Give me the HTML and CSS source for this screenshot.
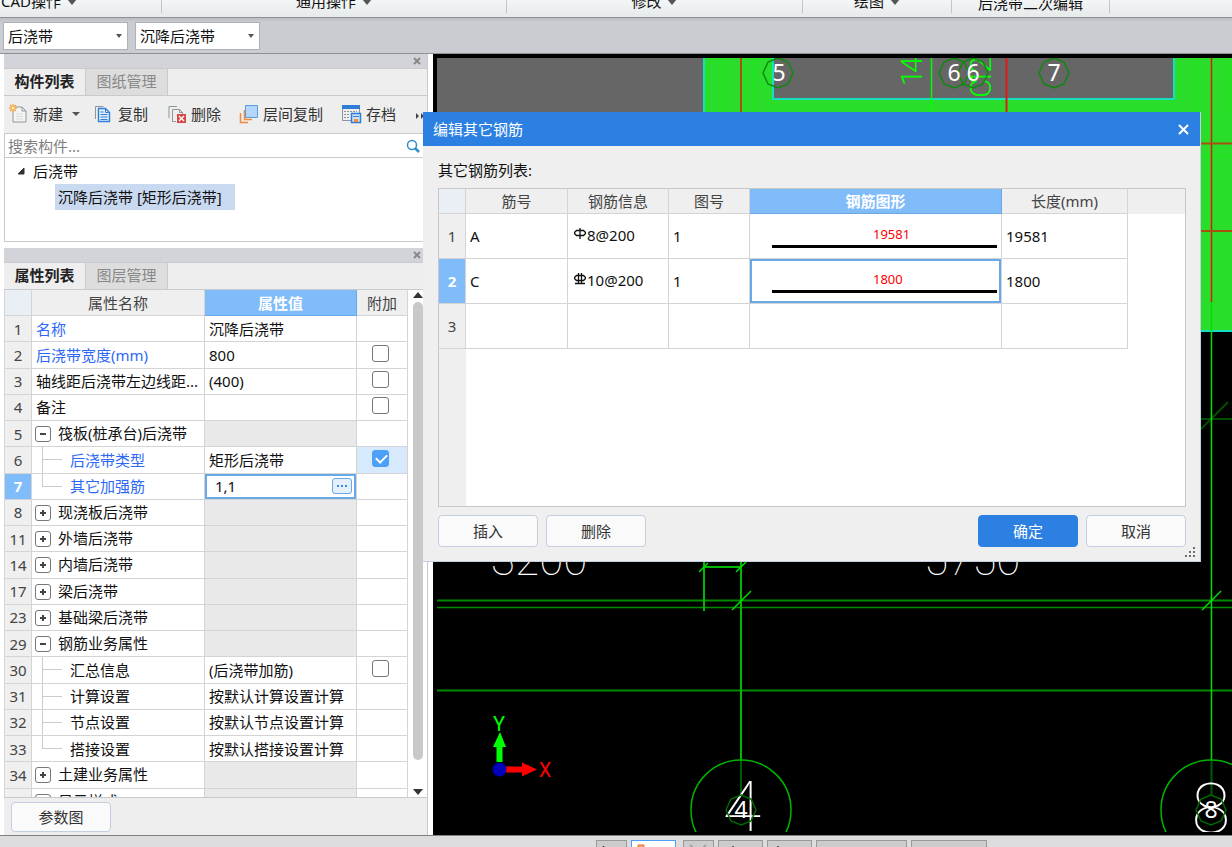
FILE: index.html
```html
<!DOCTYPE html>
<html lang="zh-CN">
<head>
  <meta charset="utf-8">
  <title>编辑其它钢筋</title>
  <link rel="stylesheet" href="styles.css">
</head>
<body>

<nav class="ribbon">
  <div class="group first">CAD操作 <i class="caret big"></i></div>
  <div class="group common">通用操作 <i class="caret big"></i></div>
  <div class="group modify">修改 <i class="caret big"></i></div>
  <div class="group draw">绘图 <i class="caret big"></i></div>
  <div class="group edit">后浇带二次编辑</div>
</nav>

<div class="pickbar">
  <label class="pick"><select aria-label="构件类型"><option>后浇带</option></select></label>
  <label class="pick"><select aria-label="构件名称"><option>沉降后浇带</option></select></label>
</div>

<div class="workspace">
  <aside class="side">
    <section class="dock">
      <div class="dock-title"><button class="x" aria-label="关闭"><svg width="8" height="8"><path d="M1 1l6 6M7 1l-6 6"/></svg></button></div>
      <div class="tabs">
        <button class="tab active">构件列表</button>
        <button class="tab">图纸管理</button>
      </div>
      <div class="toolbar">
        <button class="tool t-new">
          <svg width="20" height="20" viewBox="0 0 20 20"><path d="M4 3h9l4 4v11H4z" fill="#f4f4f4" stroke="#8c969c"/><path d="M13 3v4h4" fill="none" stroke="#8c969c"/><path d="M7 10h7M7 12.500h7M7 15h7" stroke="#d5dadd"/><path d="M4 0v8M0 4h8M1 1l6 6M7 1l-6 6" stroke="#f7a53b" stroke-width="1.300"/><circle cx="4" cy="4" r="1.500" fill="#fff0c8"/></svg>
          新建 <i class="caret"></i>
        </button>
        <button class="tool t-copy">
          <svg width="18" height="20" viewBox="0 0 18 20"><path d="M1.500 15V2.500h8" fill="none" stroke="#8c969c"/><path d="M4.500 4.500h7l4 4v9h-11z" fill="#e5f0fc" stroke="#2f7dd6" stroke-width="1.400"/><path d="M11.500 4.500v4h4M6.500 8h3M6.500 10.500h7M6.500 13h7M6.500 15.500h7" fill="none" stroke="#2f7dd6"/></svg>
          复制
        </button>
        <button class="tool t-del">
          <svg width="20" height="20" viewBox="0 0 20 20"><path d="M2 14V2.500h8M9 17.500H5.500v-12h7l3 3V10M12.500 5.500v3h3" fill="none" stroke="#8c969c"/><path d="M10 10h9v9h-9z" fill="#d64a4a"/><path d="M12 12l5 5M17 12l-5 5" stroke="#fff" stroke-width="1.300"/></svg>
          删除
        </button>
        <button class="tool t-layer">
          <svg width="20" height="20" viewBox="0 0 20 20"><path d="M1.500 9v9.500H9M5.500 6v9.500H13" fill="none" stroke="#f08a3c" stroke-width="1.500"/><path d="M6.500 1.500h12v12h-12z" fill="#b5d6fb" stroke="#5b9be4"/></svg>
          层间复制
        </button>
        <button class="tool t-save">
          <svg width="21" height="20" viewBox="0 0 21 20"><path d="M1 1h18v4H1z" fill="#2f7dd6"/><path d="M1.500 5v11.500H10M18.500 5v5" fill="none" stroke="#8c969c"/><path d="M3 7.500h13M3 10.500h6M3 13.500h6" stroke="#8c969c" stroke-dasharray="2 1"/><path d="M10.500 9.500h9v9h-9z" fill="#cfe3fa" stroke="#2f7dd6" stroke-width="1.500"/><path d="M13 15h4v3h-4z" fill="#f08a3c"/><path d="M12 12.500h6" stroke="#2f7dd6"/></svg>
          存档
        </button>
        <button class="more" aria-label="更多"><svg width="8" height="8"><path d="M0 1l3 3-3 3zM5 1l3 3-3 3z" fill="#444"/></svg></button>
      </div>
      <div class="search">
        <input type="text" placeholder="搜索构件..." aria-label="搜索构件">
        <svg width="14" height="14" viewBox="0 0 14 14"><circle cx="6" cy="6" r="4.500" fill="none" stroke="#2f8fc9" stroke-width="1.500"/><path d="M9 9l4 4" stroke="#2f8fc9" stroke-width="2.500"/></svg>
      </div>
      <div class="tree">
        <div class="node"><svg width="8" height="8"><path d="M7 1v6H1z" fill="#333" stroke="#333"/></svg>后浇带</div>
        <div class="leaf">沉降后浇带 [矩形后浇带]</div>
      </div>
    </section>

    <section class="dock props">
      <div class="dock-title"><button class="x" aria-label="关闭"><svg width="8" height="8"><path d="M1 1l6 6M7 1l-6 6"/></svg></button></div>
      <div class="tabs">
        <button class="tab active">属性列表</button>
        <button class="tab">图层管理</button>
      </div>
      <div class="prop-body">
        <div class="prop-scroll">
          <table class="prop-table">
            <colgroup><col class="c-no"><col class="c-name"><col class="c-val"><col class="c-add"></colgroup>
            <thead>
              <tr><th class="corner"></th><th>属性名称</th><th class="on">属性值</th><th>附加</th></tr>
            </thead>
            <tbody>
              <tr><th>1</th><td class="blue">名称</td><td>沉降后浇带</td><td></td></tr>
              <tr><th>2</th><td class="blue">后浇带宽度(mm)</td><td>800</td><td class="chk"><input type="checkbox" aria-label="附加 后浇带宽度"></td></tr>
              <tr><th>3</th><td>轴线距后浇带左边线距...</td><td>(400)</td><td class="chk"><input type="checkbox" aria-label="附加 轴线距"></td></tr>
              <tr><th>4</th><td>备注</td><td></td><td class="chk"><input type="checkbox" aria-label="附加 备注"></td></tr>
              <tr class="grp"><th>5</th><td><button class="exp minus" aria-label="折叠"></button>筏板(桩承台)后浇带</td><td></td><td></td></tr>
              <tr><th>6</th><td class="child blue">后浇带类型</td><td>矩形后浇带</td><td class="chk lit"><input type="checkbox" checked aria-label="附加 后浇带类型"></td></tr>
              <tr class="cur"><th>7</th><td class="child last blue">其它加强筋</td><td class="edit-cell"><div class="editor"><input type="text" value="1,1" aria-label="其它加强筋"><button class="dots" aria-label="编辑"><svg width="12" height="2"><path d="M1 0h2v2H1zM5 0h2v2H5zM9 0h2v2H9z" fill="#3c8ae0"/></svg></button></div></td><td></td></tr>
              <tr class="grp"><th>8</th><td><button class="exp" aria-label="展开"></button>现浇板后浇带</td><td></td><td></td></tr>
              <tr class="grp"><th>11</th><td><button class="exp" aria-label="展开"></button>外墙后浇带</td><td></td><td></td></tr>
              <tr class="grp"><th>14</th><td><button class="exp" aria-label="展开"></button>内墙后浇带</td><td></td><td></td></tr>
              <tr class="grp"><th>17</th><td><button class="exp" aria-label="展开"></button>梁后浇带</td><td></td><td></td></tr>
              <tr class="grp"><th>23</th><td><button class="exp" aria-label="展开"></button>基础梁后浇带</td><td></td><td></td></tr>
              <tr class="grp"><th>29</th><td><button class="exp minus" aria-label="折叠"></button>钢筋业务属性</td><td></td><td></td></tr>
              <tr><th>30</th><td class="child">汇总信息</td><td>(后浇带加筋)</td><td class="chk"><input type="checkbox" aria-label="附加 汇总信息"></td></tr>
              <tr><th>31</th><td class="child">计算设置</td><td>按默认计算设置计算</td><td></td></tr>
              <tr><th>32</th><td class="child">节点设置</td><td>按默认节点设置计算</td><td></td></tr>
              <tr><th>33</th><td class="child last">搭接设置</td><td>按默认搭接设置计算</td><td></td></tr>
              <tr class="grp"><th>34</th><td><button class="exp" aria-label="展开"></button>土建业务属性</td><td></td><td></td></tr>
              <tr class="grp"><th>37</th><td><button class="exp minus" aria-label="折叠"></button>显示样式</td><td></td><td></td></tr>
            </tbody>
          </table>
        </div>
        <div class="scrollbar">
          <svg width="10" height="6"><path d="M0 6l5-6 5 6z" fill="#333"/></svg>
          <div class="thumb"></div>
          <svg width="10" height="6"><path d="M0 0l5 6 5-6z" fill="#333"/></svg>
        </div>
      </div>
      <div class="prop-foot"><button class="btn">参数图</button></div>
    </section>
  </aside>

  <main class="cad">
    <svg class="drawing" viewBox="437 58 795 774" preserveAspectRatio="xMinYMin slice">
      <defs>
        <path id="bubble" d="M-15 0L-10-11L0-15L10-11L15 0L10 11L0 15L-10 11z" fill="none"/>
      </defs>
      <!-- slab -->
      <rect x="437" y="58" width="267" height="60" fill="#666"/>
      <rect x="704" y="58" width="528" height="273" fill="#2bdd2b"/>
      <path d="M722.500 58v60M753.500 58v60M1196.500 58v57M1226.500 58v60M1201 156.500h31" stroke="#12ee12" fill="none"/>
      <rect x="773" y="58" width="400" height="41" fill="#666"/>
      <path d="M704 58v60M773 56v43h401v-43M1201 331h31" stroke="#13dfc2" stroke-width="2" fill="none"/>
      <path d="M931.500 58v60" stroke="#0f0" stroke-width="1.500"/>
      <path d="M741 58v60" stroke="#a8500f" stroke-width="2"/>
      <path d="M1006.500 58v60" stroke="#e01818" stroke-width="2"/>
      <path d="M1211.500 58v244" stroke="#d81c10" stroke-width="1.500"/>
      <path d="M1201 143.500h31M1201 231h31" stroke="#a8500f" stroke-width="2"/>
      <!-- bar marks -->
      <g class="mark">
        <text transform="translate(922 86) rotate(-90)">1</text>
        <text transform="translate(922 73) rotate(-90)">4</text>
        <text transform="translate(991 98) rotate(-90)">C</text>
        <text transform="translate(991 86) rotate(-90)">1</text>
        <text transform="translate(991 73) rotate(-90)">2</text>
      </g>
      <g stroke="#0c8a0c" stroke-width="1.500">
        <use href="#bubble" x="778" y="73"/>
        <use href="#bubble" x="954" y="73"/>
        <use href="#bubble" x="973" y="73"/>
        <use href="#bubble" x="1054" y="73"/>
      </g>
      <g class="axis-no">
        <text x="779" y="81">5</text><text x="954" y="81">6</text><text x="973" y="81">6</text><text x="1054" y="81">7</text>
      </g>
      <!-- grid lines -->
      <g stroke="#008a00" stroke-width="2" fill="none">
        <path d="M437 600.500h795M437 690.500h795"/>
        <path d="M437 607.500h795" stroke-width="1.500"/>
        <path d="M741 760v35M1211.500 760v35" stroke="#005c00"/>
      </g>
      <path d="M1201 419h31M1201 429l27-27" stroke="#004d00" stroke-width="2"/>
      <path d="M1211.500 302v458" stroke="#0d0" stroke-width="1.500" fill="none"/>
      <path d="M741 555v205M704 555v56M704 567h37" stroke="#00b800" stroke-width="2" fill="none"/>
      <path d="M699 572l9-9M736 572l10-10M732 610l19-19M1202 610l19-19" stroke="#0d0" stroke-width="1.500"/>
      <circle cx="741" cy="810" r="50" fill="none" stroke="#00b400" stroke-width="1.500"/>
      <circle cx="1211" cy="810" r="50" fill="none" stroke="#00b400" stroke-width="1.500"/>
      <g class="dim">
        <text x="491" y="575">3200</text>
        <text x="924" y="575">5750</text>
      </g>
      <g class="grid-no">
        <text x="742" y="831">4</text>
        <text x="1211" y="833">8</text>
      </g>
      <g stroke="#006a00" stroke-width="1.500">
        <use href="#bubble" x="741" y="810"/>
        <use href="#bubble" x="1211" y="810"/>
      </g>
      <g class="axis-no">
        <text x="741" y="818">4</text><text x="1211" y="818">8</text>
      </g>
      <!-- ucs -->
      <path d="M499.500 762v-16" stroke="#0f0" stroke-width="6"/><path d="M493 747h13l-6-15z" fill="#0f0"/>
      <path d="M505 769.500h18" stroke="#f00" stroke-width="6"/><path d="M522 762.500v14l15-7z" fill="#f00"/>
      <circle cx="499.500" cy="769.500" r="7" fill="#0000b8"/>
      <g class="ucs"><text x="499" y="731" fill="#0f0">Y</text><text x="545" y="777" fill="#f00">X</text></g>
    </svg>
  </main>

  <div class="dialog" role="dialog" aria-label="编辑其它钢筋">
    <div class="dlg-title">编辑其它钢筋<button class="dlg-x" aria-label="关闭"><svg width="11" height="11"><path d="M1 1l9 9M10 1l-9 9" stroke="#fff" stroke-width="2"/></svg></button></div>
    <div class="dlg-body">
      <div class="dlg-label">其它钢筋列表:</div>
      <div class="list">
        <table class="bar-table">
          <colgroup><col class="b-no"><col class="b-id"><col class="b-info"><col class="b-pic"><col class="b-shape"><col class="b-len"></colgroup>
          <thead>
            <tr><th class="corner"></th><th>筋号</th><th>钢筋信息</th><th>图号</th><th class="on">钢筋图形</th><th>长度(mm)</th></tr>
          </thead>
          <tbody>
            <tr><th>1</th><td>A</td><td class="info"><svg width="12" height="12" viewBox="0 0 12 12"><path d="M2.500 2.500h7l2 2v1l-2 2h-7l-2-2v-1zM6 0v11" fill="none" stroke="#111" stroke-width="1.300"/></svg>8@200</td><td>1</td><td class="shape"><span>19581</span></td><td>19581</td></tr>
            <tr class="cur"><th>2</th><td>C</td><td class="info"><svg width="12" height="12" viewBox="0 0 12 12"><path d="M2.500 2.500h7l2 2v1l-2 2h-7l-2-2v-1zM4.500 0v10M7.500 0v10M1 10.500h10" fill="none" stroke="#111" stroke-width="1.300"/></svg>10@200</td><td>1</td><td class="shape sel"><span>1800</span></td><td>1800</td></tr>
            <tr><th>3</th><td></td><td></td><td></td><td></td><td></td></tr>
          </tbody>
        </table>
      </div>
      <div class="dlg-foot">
        <button class="btn">插入</button>
        <button class="btn">删除</button>
        <button class="btn primary">确定</button>
        <button class="btn">取消</button>
      </div>
    </div>
    <svg class="grip" width="11" height="11"><path d="M8 0h2v2H8zM8 4h2v2H8zM4 4h2v2H4zM8 8h2v2H8zM4 8h2v2H4zM0 8h2v2H0z" fill="#6a7078"/></svg>
  </div>
</div>

<footer class="status">
  <button class="s1" aria-label="正交"><svg width="20" height="16"><path d="M2.500 2v12h12" fill="none" stroke="#333" stroke-width="1.500"/></svg></button>
  <button class="s2 on" aria-label="捕捉"><svg width="26" height="16"><path d="M6 3.500h15v10H6z" fill="none" stroke="#3c7dcc"/><path d="M2 1h6v6H2z" fill="#f7a36b" stroke="#e8742a"/></svg></button>
  <button class="s1" aria-label="交点"><svg width="20" height="16"><path d="M2 1l16 14M18 1L2 15" stroke="#999" stroke-width="1.500"/></svg></button>
  <button class="s2" aria-label="垂点"><svg width="20" height="16"><path d="M10 2v12M2 14h16" stroke="#333" stroke-width="1.500"/></svg></button>
  <button class="s2" aria-label="中点"><svg width="36" height="16"><path d="M6 2v12h12" fill="none" stroke="#333" stroke-width="1.500"/></svg></button>
  <button class="s3" aria-label="顶点"></button>
  <button class="s4" aria-label="坐标"></button>
</footer>

</body>
</html>
```
FILE: styles.css
```css
* {box-sizing: border-box}

body {
  margin: 0;
  height: 100vh;
  display: flex;
  flex-direction: column;
  overflow: hidden;
  background: #fff;
  color: #111;
  font: 15px/20px "Noto Sans", "Noto Sans CJK SC", sans-serif;
}

button, input, select {
  font: inherit;
  color: inherit;
  margin: 0;
  padding: 0;
  border: none;
  background: none;
}

table {
  border-collapse: separate;
  border-spacing: 0;
  table-layout: fixed;
}

.caret {
  display: inline-block;
  border: 4px solid transparent;
  border-top: 4px solid #555;
  border-bottom: none;
  margin-left: 5px;
  vertical-align: middle;
}

.caret.big {
  border-width: 6px 5px 0 5px;
  margin-left: 2px;
  vertical-align: 2px;
}

/* ribbon */
.ribbon {
  display: flex;
  align-items: flex-end;
  flex: none;
  height: 18px;
  background: linear-gradient(#f3f6f6, #e6eaeb);
  border-bottom: 1px solid #8d9095;
  overflow: hidden;
}

.group {
  flex: none;
  height: 40px;
  padding: 18px 0 2px;
  border-right: 1px solid #c3c5c7;
  margin-bottom: 4px;
  text-align: center;
  white-space: nowrap;
}

.first {width: 162px; text-align: left; padding-left: 1px}
.common {width: 345px}
.modify {width: 296px}
.draw {width: 149px}
.edit {width: 158px; padding-top: 20px}

.pickbar {
  display: flex;
  flex: none;
  gap: 7px;
  height: 36px;
  padding: 4px 3px;
  background: linear-gradient(#b9bcc1, #c9ccd1 4px);
  border-bottom: 1px solid #8d9095;
}

.pick {
  position: relative;
  width: 125px;
}

.pick select {
  appearance: none;
  width: 100%;
  height: 28px;
  padding: 0 4px;
  background: #fff;
  border: 1px solid #aeb1b6;
}

.pick::after {
  content: "";
  position: absolute;
  right: 6px;
  top: 12px;
  border: 3px solid transparent;
  border-top: 4px solid #555;
  border-bottom: none;
}

/* docks */
.workspace {
  position: relative;
  display: flex;
  flex: 1;
  min-height: 0;
}

.side {
  flex: none;
  width: 433px;
  padding: 0 5px 0 4px;
  display: flex;
  flex-direction: column;
  gap: 6px;
}

.dock {
  border-right: 1px solid #c8cad0;
}

.props {
  flex: 1;
  min-height: 0;
  display: flex;
  flex-direction: column;
}

.dock-title {
  display: flex;
  justify-content: flex-end;
  align-items: center;
  flex: none;
  height: 15px;
  padding-right: 6px;
  background: #d2d4d9;
  border-bottom: 1px solid #c8cad0;
}

.x {
  display: flex;
}

.x svg {
  fill: none;
  stroke: #888;
  stroke-width: 2;
}

.tabs {
  display: flex;
  height: 27px;
  flex: none;
  background: #eee;
  border-bottom: 1px solid #c8cad0;
}

.tab {
  width: 82px;
  padding-bottom: 2px;
  background: #ddd;
  color: #888;
  border-right: 1px solid #c8cad0;
}

.tab.active {
  background: #eee;
  color: #222;
  font-weight: bold;
}

.toolbar {
  display: flex;
  align-items: center;
  height: 38px;
  padding: 0 3px 2px 5px;
  background: #eee;
  border-bottom: 1px solid #c8cad0;
}

.tool {
  display: flex;
  align-items: center;
  gap: 4px;
  color: #333;
  white-space: nowrap;
}

.t-new {width: 85px}
.t-copy {width: 73px; gap: 6px}
.t-del {width: 72px}
.t-layer {width: 102px}
.t-save {width: 75px}

.search {
  display: flex;
  align-items: center;
  height: 24px;
  padding: 0 6px 0 3px;
  border: 1px solid #c8cad0;
  border-top: none;
}

.search input {
  flex: 1;
  outline: none;
}

.search input::placeholder {
  color: #808080;
}

.tree {
  height: 84px;
  padding: 3px 12px;
  border: 1px solid #c8cad0;
  border-top: none;
}

.node {
  display: flex;
  align-items: center;
  gap: 8px;
}

.leaf {
  width: 180px;
  height: 26px;
  line-height: 26px;
  margin: 3px 0 0 38px;
  padding-left: 3px;
  background: #c9d9f0;
  white-space: nowrap;
}

.prop-body {
  display: flex;
  flex: 1;
  min-height: 0;
  border-bottom: 1px solid #c8cad0;
}

.prop-scroll {
  flex: 1;
  overflow: hidden;
}

/* the extra height is shared out over the equal rows */
.prop-table {
  width: 404px;
  height: 525px;
  border-left: 1px solid #d4d4d4;
}

.prop-table tr {
  height: 26px;
}

.c-no {width: 27px}
.c-name {width: 173px}
.c-val {width: 152px}
.c-add {width: 51px}

th {
  padding: 0;
  background: #efefef;
  color: #444;
  font-weight: normal;
  border-right: 1px solid #d4d4d4;
  border-bottom: 1px solid #d4d4d4;
}

td {
  padding: 0 4px;
  border-right: 1px solid #d4d4d4;
  border-bottom: 1px solid #d4d4d4;
  white-space: nowrap;
}

th.corner {
  background: #eaeff6;
}

th.on {
  background: #80bbfa;
  border-color: #69a9e8;
  color: #fff;
  font-weight: bold;
}

.cur th {
  background: #80bbfa;
  color: #fff;
  font-weight: bold;
}

.blue {
  color: #2e68f5;
}

.grp td:nth-child(3) {
  background: #e9e9e9;
}

.prop-table .chk {
  padding: 0 3px 0 0;
}

.chk.lit {
  background: #d7e9fd;
}

.chk input {
  appearance: none;
  display: block;
  width: 17px;
  height: 17px;
  margin: 0 auto 3px;
  background: #fff;
  border: 1px solid #777;
  border-radius: 3px;
}

.chk input:checked {
  background: #4d9ff8;
  border-color: #4d9ff8;
}

.chk input:checked::after {
  content: "";
  display: block;
  width: 5px;
  height: 9px;
  margin: 1px 5px;
  border: solid #fff;
  border-width: 0 2px 2px 0;
  transform: rotate(45deg);
}

.exp {
  display: inline-block;
  width: 16px;
  height: 16px;
  margin: 0 7px 2px -1px;
  vertical-align: middle;
  border: 1px solid #777;
  border-radius: 3px;
  background: linear-gradient(#444, #444) center / 6px 2px no-repeat, linear-gradient(#444, #444) center / 2px 6px no-repeat;
}

.exp.minus {
  background: linear-gradient(#444, #444) center / 6px 2px no-repeat;
}

/* connector lines of the tree column */
td.child {
  padding-left: 38px;
  background: linear-gradient(#ccc, #ccc) 10px 0 / 1px 100% no-repeat, linear-gradient(#ccc, #ccc) 10px 12px / 20px 1px no-repeat;
}

td.child.last {
  background: linear-gradient(#ccc, #ccc) 10px 0 / 1px 12px no-repeat, linear-gradient(#ccc, #ccc) 10px 12px / 20px 1px no-repeat;
}

.prop-table .edit-cell {
  padding: 0;
}

.editor {
  display: flex;
  align-items: center;
  height: 25px;
  padding: 0 2px 0 8px;
  border: 2px solid #69a9e8;
}

.editor input {
  flex: 1;
  min-width: 0;
  height: 20px;
  outline: none;
}

.dots {
  display: flex;
  align-items: center;
  justify-content: center;
  width: 20px;
  height: 16px;
  background: #e4f0fc;
  border: 1px solid #69a9e8;
  border-radius: 3px;
}

.scrollbar {
  width: 19px;
  padding: 2px 0;
  display: flex;
  flex-direction: column;
  align-items: center;
}

.thumb {
  flex: 1;
  width: 10px;
  margin: 4px 0 29px;
  border-radius: 5px;
  background: #c9c9c9;
}

.prop-foot {
  flex: none;
  height: 37px;
  padding: 4px 7px;
  background: #eee;
}

.btn {
  width: 100px;
  height: 32px;
  background: #fafafa;
  border: 1px solid #c5cde0;
  border-radius: 4px;
  color: #333;
}

.prop-foot .btn {
  height: 30px;
}

.btn.primary {
  margin-left: auto;
  background: #2c80e2;
  border-color: #2c80e2;
  color: #fff;
}

/* drawing area */
.cad {
  flex: 1;
  min-width: 0;
  padding: 4px 0 3px 4px;
  background: #000;
}

.drawing {
  display: block;
  width: 100%;
  height: 100%;
}

.mark, .dim, .grid-no, .ucs {
  font-family: Roboto, sans-serif;
  font-weight: 100;
  fill: #fff;
}

.mark {
  fill: #0f0;
  font-size: 30px;
  font-weight: 300;
}

.dim {
  font-size: 44px;
}

.grid-no {
  font-size: 70px;
  text-anchor: middle;
}

.axis-no {
  fill: #fff;
  font-size: 23px;
  text-anchor: middle;
}

.ucs {
  font-size: 20px;
  font-weight: 400;
  text-anchor: middle;
}

/* dialog */
.dialog {
  position: absolute;
  left: 423px;
  top: 58px;
  width: 778px;
  background: #efefef;
  border: 1px solid #c5cde0;
  border-top: none;
  border-left: none;
}

.dlg-title {
  display: flex;
  align-items: center;
  justify-content: space-between;
  height: 34px;
  padding: 0 11px 0 10px;
  background: #2c80e2;
  color: #fff;
}

.dlg-x {
  display: flex;
}

.dlg-body {
  padding: 14px 14px 14px 15px;
}

.dlg-label {
  margin-bottom: 8px;
}

.list {
  border: 1px solid #c8c8c8;
  background: linear-gradient(#efefef, #efefef) 0 0 / 27px 100% no-repeat, linear-gradient(#efefef, #efefef) 0 0 / 100% 25px no-repeat, #fff;
  height: 319px;
}

.bar-table {
  width: 689px;
}

.bar-table thead tr {
  height: 25px;
}

.bar-table tbody tr {
  height: 45px;
}

.b-no {width: 27px}
.b-id {width: 102px}
.b-info {width: 101px}
.b-pic {width: 81px}
.b-shape {width: 252px}
.b-len {width: 126px}

.bar-table td.info {
  padding: 0 6px 2px;
}

.info svg {
  margin-right: 1px;
  vertical-align: 1px;
}

.bar-table td.shape {
  padding: 0 4px 0 22px;
}

.shape span {
  display: block;
  height: 24px;
  padding-left: 101px;
  border-bottom: 3px solid #000;
  color: #f00;
  font-size: 13px;
  line-height: 20px;
}

.shape.sel {
  box-shadow: inset 0 0 0 2px #69a9e8;
}

.dlg-foot {
  display: flex;
  gap: 8px;
  padding-top: 8px;
}

.grip {
  position: absolute;
  right: 4px;
  bottom: 3px;
}

/* status bar */
.status {
  display: flex;
  flex: none;
  gap: 4px;
  height: 12px;
  padding: 4px 0 0 596px;
  background: #dddde0;
  border-top: 1px solid #808080;
  overflow: hidden;
}

.status button {
  display: flex;
  align-items: flex-start;
  flex: none;
  height: 24px;
  padding: 3px 4px;
  background: #ccc;
  border: 1px solid #999;
}

.status .on {
  background: #fff;
  border-color: #4d9ff8;
  margin-right: 3px;
}

.s1 {width: 31px}
.s2 {width: 45px}
.s3 {width: 91px}
.s4 {width: 76px}
```
